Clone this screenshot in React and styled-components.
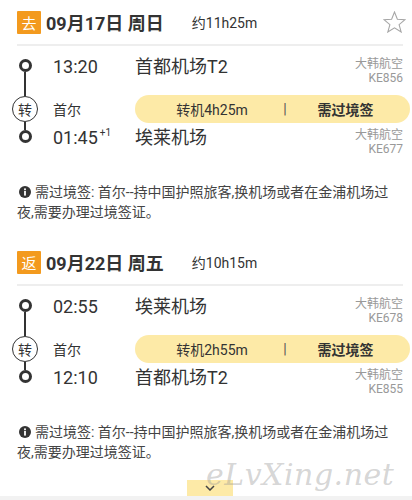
import styled, { createGlobalStyle } from "styled-components"

const GlobalStyle = createGlobalStyle`
  body {
    margin: 0;
    background: #fff;
    font-family: Roboto, "Noto Sans CJK SC", sans-serif;
    color: #333;
  }
`

const Page = styled.div`
  position: relative;
  width: 412px;
  height: 500px;
  overflow: hidden;
  background: #fff;
`

const Section = styled.section`
  height: 240px;
  box-sizing: border-box;
  padding: 0 9px 0 17px;
`

const Header = styled.div`
  display: flex;
  align-items: center;
  height: 44px;
`

const Badge = styled.span`
  display: flex;
  align-items: center;
  justify-content: center;
  width: 24px;
  height: 23px;
  background: #f39a1e;
  color: #fff;
  font-size: 15px;
  border-radius: 1px;
`

const DateText = styled.span`
  margin-left: 5px;
  font-size: 18px;
  font-weight: bold;
  color: #333;
`

const Duration = styled.span`
  margin-left: 28px;
  font-size: 14px;
  color: #333;
`

const StarBtn = styled.span`
  margin-left: auto;
  margin-right: -3px;
  display: flex;
  color: #a6a6a6;
`

const Divider = styled.div`
  height: 2px;
  background: #eeeeee;
`

const Row = styled.div`
  display: grid;
  grid-template-columns: 36px 82px 1fr auto;
  align-items: ${p => p.$align || "start"};
  height: ${p => p.$h}px;
  box-sizing: border-box;
  padding-top: ${p => p.$pad || 0}px;
`

const Rail = styled.div`
  align-self: stretch;
  width: 16px;
  display: flex;
  flex-direction: column;
  align-items: center;
`

const Line = styled.div`
  width: 2px;
  background: ${p => (p.$hidden ? "transparent" : "#333")};
  flex: ${p => (p.$h != null ? `0 0 ${p.$h}px` : "1")};
`

const Dot = styled.div`
  flex: none;
  width: 13px;
  height: 13px;
  box-sizing: border-box;
  border: 3px solid #333;
  border-radius: 50%;
  background: #fff;
`

const Transfer = styled.div`
  flex: none;
  width: 26px;
  height: 26px;
  box-sizing: border-box;
  border: 1.5px solid #333;
  border-radius: 50%;
  display: flex;
  align-items: center;
  justify-content: center;
  font-size: 14px;
  color: #333;
`

const Time = styled.div`
  font-size: 18px;
  line-height: 20px;
  color: #333;
  white-space: nowrap;

  sup {
    font-size: 10px;
    line-height: 10px;
    vertical-align: top;
    margin-left: 2px;
  }
`

const Station = styled.div`
  font-size: 18px;
  line-height: 20px;
  color: #333;
`

const Carrier = styled.div`
  display: flex;
  flex-direction: column;
  align-items: flex-end;
  font-size: 12px;
  line-height: 14px;
  color: #999;
`

const City = styled.div`
  font-size: 14px;
  color: #333;
`

const Pill = styled.div`
  grid-column: 3 / 5;
  margin-right: -7px;
  height: 28px;
  border-radius: 14px;
  background: #fdeaa7;
  display: grid;
  grid-template-columns: 146px 8px 1fr;
  align-items: center;
  font-size: 14px;
  color: #333;
`

const PillPart = styled.span`
  text-align: center;
  padding-left: ${p => p.$pl || 0}px;
  padding-right: ${p => p.$pr || 0}px;
  font-weight: ${p => (p.$bold ? "bold" : "normal")};
  color: ${p => p.$color || "#333"};
`

const Note = styled.p`
  margin: 26px 0 0;
  padding: 0 12px 0 0;
  font-size: 14px;
  line-height: 20px;
  color: #444;

  svg {
    margin: 0 4px 0 2px;
    vertical-align: -1px;
  }
`

const Footer = styled.div`
  display: flex;
  flex-direction: column;
`

const Tab = styled.div`
  align-self: center;
  margin-left: 8px;
  width: 46px;
  height: 16px;
  background: #fdeaa7;
  display: flex;
  align-items: center;
  justify-content: center;
`

const BottomBar = styled.div`
  height: 10px;
  background: #f2f2f2;
`

const Watermark = styled.div`
  position: absolute;
  left: 206px;
  top: 455px;
  font-family: "DejaVu Serif", serif;
  font-style: italic;
  font-size: 30px;
  line-height: 40px;
  letter-spacing: 0.5px;
  color: rgba(150, 150, 150, 0.4);
  pointer-events: none;
`

function StarIcon() {
  return (
    <svg width="23" height="22" viewBox="0 0 24 23" fill="none" stroke="currentColor" strokeWidth="1.1" strokeLinejoin="miter">
      <polygon points="12,1 15,8.6 23,9 16.8,14.2 19,22 12,17.6 5,22 7.2,14.2 1,9 9,8.6" />
    </svg>
  )
}

function InfoIcon() {
  return (
    <svg width="12" height="12" viewBox="0 0 12 12">
      <circle cx="6" cy="6" r="6" fill="#333" />
      <rect x="5.1" y="2.4" width="1.8" height="1.8" fill="#fff" />
      <rect x="5.1" y="5" width="1.8" height="4.6" fill="#fff" />
    </svg>
  )
}

function Chevron() {
  return (
    <svg width="10" height="6" viewBox="0 0 10 6" fill="none" stroke="#444" strokeWidth="1.5">
      <polyline points="1,1 5,5 9,1" />
    </svg>
  )
}

const trips = [
  {
    tag: "去",
    date: "09月17日 周日",
    duration: "约11h25m",
    star: true,
    from: { time: "13:20", station: "首都机场T2", airline: "大韩航空", flight: "KE856" },
    via: { city: "首尔", wait: "转机4h25m" },
    to: { time: "01:45", plus: "+1", station: "埃莱机场", airline: "大韩航空", flight: "KE677" },
  },
  {
    tag: "返",
    date: "09月22日 周五",
    duration: "约10h15m",
    from: { time: "02:55", station: "埃莱机场", airline: "大韩航空", flight: "KE678" },
    via: { city: "首尔", wait: "转机2h55m" },
    to: { time: "12:10", station: "首都机场T2", airline: "大韩航空", flight: "KE855" },
  },
]

function Trip({ trip }) {
  const { from, via, to } = trip
  return (
    <Section>
      <Header>
        <Badge>{trip.tag}</Badge>
        <DateText>{trip.date}</DateText>
        <Duration>{trip.duration}</Duration>
        {trip.star && <StarBtn><StarIcon /></StarBtn>}
      </Header>
      <Divider />

      <Row $h={44} $pad={11}>
        <Rail>
          <Line $h={2} $hidden />
          <Dot />
          <Line />
        </Rail>
        <Time>{from.time}</Time>
        <Station>{from.station}</Station>
        <Carrier>
          <span>{from.airline}</span>
          <span>{from.flight}</span>
        </Carrier>
      </Row>

      <Row $h={38} $align="center">
        <Rail>
          <Line />
          <Transfer>转</Transfer>
          <Line />
        </Rail>
        <City>{via.city}</City>
        <Pill>
          <PillPart $pl={8}>{via.wait}</PillPart>
          <PillPart $color="#555">|</PillPart>
          <PillPart $pr={8} $bold>需过境签</PillPart>
        </Pill>
      </Row>

      <Row $h={28}>
        <Rail>
          <Line $h={2} />
          <Dot />
          <Line $hidden />
        </Rail>
        <Time>
          {to.time}
          {to.plus && <sup>{to.plus}</sup>}
        </Time>
        <Station>{to.station}</Station>
        <Carrier>
          <span>{to.airline}</span>
          <span>{to.flight}</span>
        </Carrier>
      </Row>

      <Note>
        <InfoIcon />需过境签: 首尔--持中国护照旅客,换机场或者在金浦机场过夜,需要办理过境签证。
      </Note>
    </Section>
  )
}

export default function App() {
  return (
    <Page>
      <GlobalStyle />
      {trips.map(t => (
        <Trip key={t.tag} trip={t} />
      ))}
      <Footer>
        <Tab><Chevron /></Tab>
        <BottomBar />
      </Footer>
      <Watermark>eLvXing.net</Watermark>
    </Page>
  )
}
